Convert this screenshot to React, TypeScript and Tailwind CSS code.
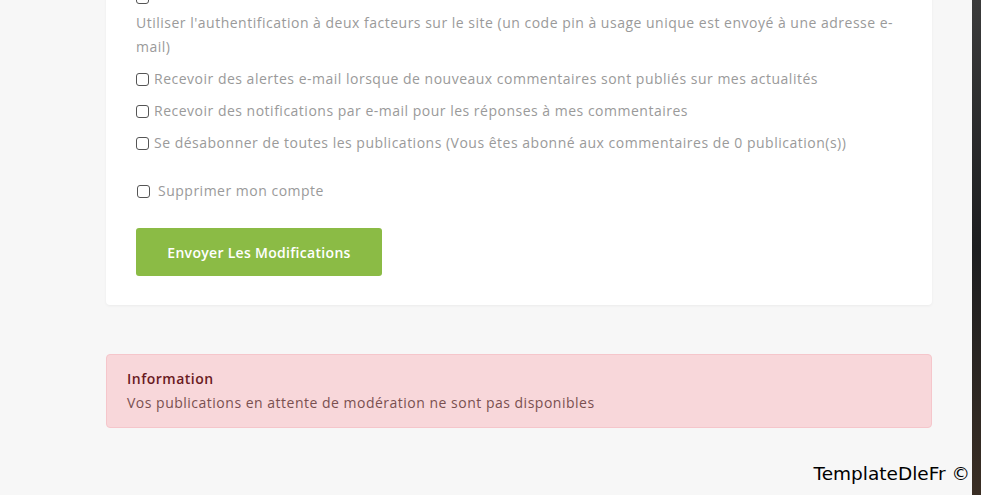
import React from 'react';

const Check: React.FC = () => (
  <span className="block w-[13px] h-[13px] shrink-0 border border-[#555] rounded-[3px] bg-white" />
);

const options = [
  'Recevoir des alertes e-mail lorsque de nouveaux commentaires sont publiés sur mes actualités',
  'Recevoir des notifications par e-mail pour les réponses à mes commentaires',
  'Se désabonner de toutes les publications (Vous êtes abonné aux commentaires de 0 publication(s))',
];

export default function App() {
  return (
    <div className="flex w-[981px] h-[495px] overflow-hidden bg-[#f7f7f7] font-['Open_Sans',sans-serif] relative">
      <div className="w-[972px] shrink-0 pl-[106px] pr-[40px]">
        <div className="-mt-[9px] bg-white rounded-b-[4px] shadow-[0_1px_3px_rgba(0,0,0,0.05)] pl-[30px] pr-[38px] pb-[29px]">
          <div className="flex">
            <Check />
          </div>
          <p className="mt-[7px] text-[14px] leading-[24px] text-[#9a9a9a] tracking-[0.5px]">
            Utiliser l'authentification à deux facteurs sur le site (un code pin à usage unique est envoyé à une adresse e-mail)
          </p>
          <div className="mt-[8px] flex flex-col gap-[8px]">
            {options.map((o) => (
              <label key={o} className="flex items-center gap-[5px] text-[14px] leading-[24px] text-[#9a9a9a] tracking-[0.5px]">
                <Check />
                <span>{o}</span>
              </label>
            ))}
          </div>
          <label className="mt-[24px] flex items-center gap-[8px] text-[14px] leading-[24px] text-[#9a9a9a] tracking-[0.5px] pl-px">
            <Check />
            <span>Supprimer mon compte</span>
          </label>
          <button className="mt-[25px] w-[246px] h-[48px] rounded-[3px] bg-[#8bbb45] text-white text-[14px] font-semibold tracking-[0.3px]">
            Envoyer Les Modifications
          </button>
        </div>

        <div className="mt-[49px] border border-[#f5c6cb] bg-[#f8d7da] rounded-[4px] px-[20px] py-[12px] text-[14px] leading-[24px] tracking-[0.5px]">
          <div className="font-semibold text-[#6a1a22]">Information</div>
          <div className="text-[#7a5050]">Vos publications en attente de modération ne sont pas disponibles</div>
        </div>
      </div>
      <div className="flex-1 bg-gradient-to-b from-[#3b3b3b] via-[#1d1e20] to-[#3a2e24]" />
      <div className="absolute right-[11px] bottom-[8px] font-['DejaVu_Sans',sans-serif] text-[18.5px] leading-[26px] text-black">
        TemplateDleFr ©
      </div>
    </div>
  );
}
